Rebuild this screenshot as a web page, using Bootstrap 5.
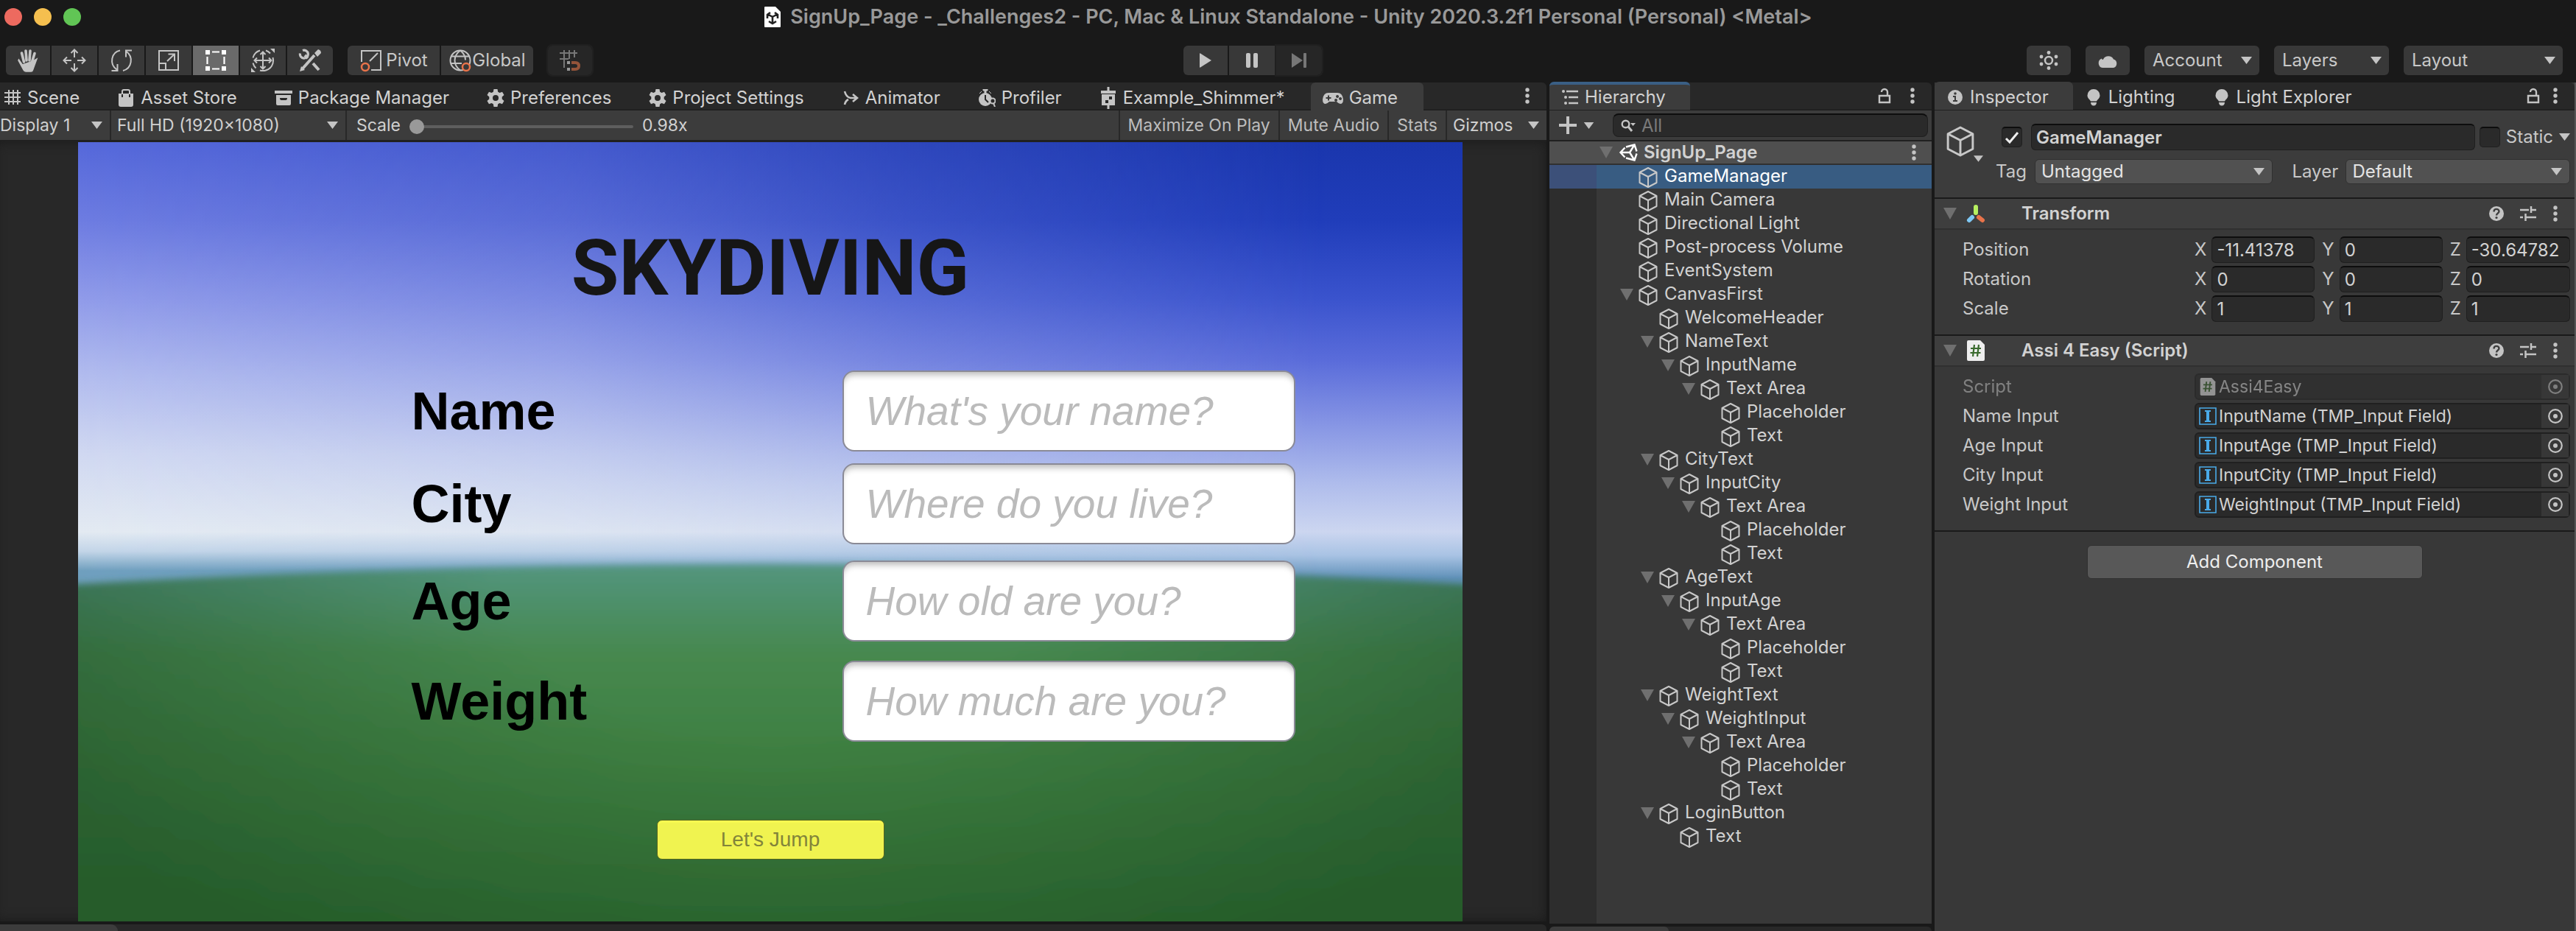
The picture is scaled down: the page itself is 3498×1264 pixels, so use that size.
<!DOCTYPE html>
<html lang="en">
<head>
<meta charset="utf-8">
<meta name="viewport" content="width=device-width, initial-scale=1">
<title>SignUp_Page - Unity Editor</title>
<link href="https://cdn.jsdelivr.net/npm/bootstrap@5.3.0/dist/css/bootstrap.min.css" rel="stylesheet">
<style>
:root{--edge:#191919;--strip:#282828;--bar:#3c3c3c;--panel:#383838;--txt:#c8c8c8;--well:#2a2a2a}
body{background:var(--edge);color:var(--txt);font-family:Inter,sans-serif;font-size:24px;line-height:32px}
svg{display:block;flex:none}
.ico{width:24px;height:24px;fill:#c4c4c4;stroke:none}
.ln{fill:none;stroke:#c4c4c4;stroke-width:2}
button,select,input{font:inherit;color:inherit}
button{background:none;border:0;padding:0}
.editor{height:100vh;overflow:hidden}
.titlebar{height:46px;color:#999;font-size:27px;font-weight:600}
.lights{width:220px;padding-left:6px;gap:16px}
.light{width:24px;height:24px;border-radius:50%}
.tools{height:66px;padding:0 18px 0 8px}
.tgroup{gap:2px}
.tbtn{height:40px;min-width:62px;background:var(--panel);display:flex;align-items:center;justify-content:center}
.tbtn.on{background:#6a6a6a}
.tbtn.rounded,.tgroup>.tbtn:first-child{min-width:60px}
.tgroup>.tbtn.named{min-width:125px}
.tbtn:disabled{background:#262626;outline:2px solid #202020}
.tgroup>:first-child{border-radius:6px 0 0 6px}
.tgroup>:last-child{border-radius:0 6px 6px 0}
.tgroup>:only-child{border-radius:6px}
.tbtn svg{width:32px;height:32px}
.lside{flex:1598 1 0}
.rside{flex:1684 1 0;gap:20px}
.tsel{height:40px;width:156px;background-color:var(--panel);border-radius:6px;padding:0 40px 0 11px}
.tsel.wide{width:216px}
.dd{border:0;appearance:none;background-repeat:no-repeat;background-position:right 10px center;background-size:15px 10px;
background-image:url("data:image/svg+xml,%3Csvg xmlns='http://www.w3.org/2000/svg' viewBox='0 0 15 10'%3E%3Cpath fill='%23c4c4c4' d='M0 0h15L7.5 10z'/%3E%3C/svg%3E")}
.gamecol{flex:1 1 0;min-width:0;margin-left:-8px}
.hiercol{flex:0 0 519px;min-width:0}
.inspcol{flex:0 0 871px;min-width:0;border-right:2px solid #555;background:var(--panel)}
.strip{height:38px;background:var(--strip);border-radius:6px 6px 0 0;border-bottom:2px solid #202020;flex:none}
.etab{display:flex;align-items:center;gap:8px;height:38px;padding:4px 35px 0 16px;color:#d2d2d2;text-decoration:none;white-space:nowrap}
.etab.on{background:var(--bar);border-radius:6px 6px 0 0}
.etab.focus{border-top:4px solid #3a5f85;padding-top:0}
.etab:first-child{padding-right:33px}
.gamecol .etab:first-child{padding-left:13px;padding-right:35px}
.gbar{height:42px;background:var(--bar);border-bottom:2px solid #202020;flex:none;font-size:23px;color:#d0d0d0}
.gbar>*{border-right:2px solid #282828;height:40px;display:flex;align-items:center;white-space:nowrap}
.gbar>:last-child{border:0}
.gbar>button{padding:0 11px;color:#bdbdbd}
.gsel{background-color:transparent;border-radius:0;flex:none}
.rng{appearance:none;background:none;width:304px;height:20px;margin:4px 12px 0 12px}
.rng::-webkit-slider-runnable-track{height:4px;background:#5e5e5e;border-radius:2px}
.rng::-webkit-slider-thumb{appearance:none;width:20px;height:20px;margin-top:-8px;border-radius:50%;background:#999}
.stage{flex:1 1 0;min-height:0;background:#282828;box-shadow:inset 0 0 16px #1a1a1a;padding-top:1px}
.screen{height:100%;min-width:0;aspect-ratio:16/9;font-family:"Liberation Sans",sans-serif}
.sky{position:absolute;inset:0;width:100%;height:100%;z-index:0}
.form-layer{position:relative;padding-top:119px}
.hero{font:700 105px/105px Roboto,sans-serif;color:#161616;margin:0 0 86px;text-align:center}
.frow{padding:0 227px 0 453px;height:110px}
.frow.g1{margin-top:16px}.frow.g2{margin-top:22px}.frow.g3{margin-top:26px}
.frow label{width:585px;flex:none;font-size:72px;line-height:80px;color:#000;font-weight:700}
.frow input{flex:1 1 0;width:0;min-width:0;height:110px;border:2px solid rgba(60,60,80,.6);border-radius:16px;background:#fff;padding:0 30px;font-size:55px;color:#323232;box-shadow:inset 0 8px 8px -4px #bbb}
.frow input::placeholder{color:#bbb;font-style:italic;opacity:1}
.jump{width:309px;height:54px;margin-top:106px;background:#f0f350;border:1px solid #56641f;border-radius:7px;font-size:28px;color:#82843a;box-shadow:inset 0 3px 1px #f8fb50}
.lower{background:var(--strip);border-radius:6px 6px 0 0;overflow:hidden;flex:none}
.lower div{background:var(--bar);height:100%;border-radius:6px 12px 0 0}
.hbar{height:42px;background:var(--bar);border-bottom:2px solid #202020;padding:4px 5px 4px 13px;flex:none}
.search{flex:1 1 0;height:32px;background:var(--well);border:1px solid #1f1f1f;border-top:2px solid #0d0d0d;border-radius:8px;padding-left:10px;gap:8px}
.search input{background:none;border:0;outline:0;flex:1 1 0;min-width:0;height:28px;padding:0}
.search input::placeholder{color:#7a7a7a;opacity:1}
.tree{flex:1 1 0;min-height:0;background:linear-gradient(90deg,#2d2d2d 64px,var(--panel) 64px);margin:0}
.tree li{display:flex;align-items:center;height:32px;white-space:nowrap;color:#d2d2d2}
.tree li span{padding-bottom:3px}
.tree svg.cube{width:28px;height:30px;margin:2px 8px 0 6px}
.tree .arr,.tri{width:18px;height:16px;fill:#6f6f6f;flex:none}
.tree .scene{background:#4f4f4f;border-bottom:2px solid #303030;font-weight:600;padding-left:68px;padding-right:20px}
.tree .scene span{padding-bottom:0}
.tree .pick{background:linear-gradient(90deg,#3c5079 64px,#385c82 64px);color:#fff}
.lv1{padding-left:96px}.lv2{padding-left:124px}.lv3{padding-left:152px}.lv4{padding-left:180px}.lv5{padding-left:208px}
.well{background:var(--well);border:1px solid #1f1f1f;border-top:2px solid #0d0d0d;border-radius:6px;height:36px;padding:0 6px;color:#d2d2d2;width:0;min-width:0}
.ihead{background:var(--bar);padding:16px 6px 18px 14px;border-bottom:2px solid #1a1a1a}
.cb{appearance:none;width:28px;height:28px;margin:0;flex:none;background:var(--well) center/20px no-repeat;border:1px solid #1f1f1f;border-top:2px solid #0d0d0d;border-radius:5px}
.cb:checked{background-image:url("data:image/svg+xml,%3Csvg xmlns='http://www.w3.org/2000/svg' viewBox='0 0 20 20'%3E%3Cpath fill='none' stroke='%23eee' stroke-width='3' d='M2 11l5 5L18 3'/%3E%3C/svg%3E")}
.pop{height:34px;background-color:#515151;border:1px solid #303030;border-radius:6px;padding:0 8px;color:#e4e4e4;min-width:0}
.comp{height:42px;background:#3e3e3e;border-bottom:2px solid #303030;padding:0 22px 0 12px}
.comp h2{font-size:24px;line-height:32px;font-weight:600;margin:0;color:#d2d2d2}
.props{padding:7px 6px 15px 38px;border-bottom:2px solid #1a1a1a}
.prow{display:flex;align-items:center;height:40px}
.prow>.nm{width:315px;flex:none}
.axes{gap:10px}
.axes label{display:flex;align-items:center;flex:1 1 0;min-width:0;gap:7px}
.axes input{flex:1 1 0}
.obj{flex:1 1 0;display:flex;align-items:center;height:36px;background:var(--well);border:2px solid #202020;border-radius:6px;font-size:23px;color:#d2d2d2;padding-left:4px;gap:3px}
.obj .pickr{margin-left:auto;width:37px;height:32px;background:#373737;display:flex;align-items:center;justify-content:center}
.dim{opacity:.5}
.addc{width:456px;height:46px;background:#585858;border:1px solid #303030;border-radius:6px;color:#eee;margin-top:18px}
</style>
</head>
<body>
<svg width="0" height="0" class="position-absolute" aria-hidden="true">
<symbol id="cube" viewBox="0 0 28 30"><path d="M14 2l11.500 6v14L14 28 2.500 22V8zM2.500 8L14 14l11.500-6M14 14v14" fill="none" stroke="#c8c8c8" stroke-width="2" stroke-linejoin="round"/></symbol>
<symbol id="tri" viewBox="0 0 18 16"><path d="M0 0h18L9 16z"/></symbol>
<symbol id="dots" viewBox="0 0 6 24"><circle cx="3" cy="4" r="2.700"/><circle cx="3" cy="12" r="2.700"/><circle cx="3" cy="20" r="2.700"/></symbol>
<symbol id="lock" viewBox="0 0 18 24"><path d="M2 12h14v9H2zM13 12V7a4 4 0 0 0-8 0" fill="none" stroke="#c4c4c4" stroke-width="2.400"/></symbol>
<symbol id="gear" viewBox="0 0 24 24"><path fill-rule="evenodd" d="M9.500 0h5l.7 3.700 2.300 1.300 3.500-1.300 2.500 4.300-2.800 2.500v3l2.800 2.500-2.500 4.300-3.500-1.300-2.300 1.300-.7 3.700h-5l-.7-3.700-2.300-1.300L3 20.300.5 16l2.800-2.500v-3L.5 8 3 3.700 6.500 5l2.300-1.300zM12 8a4 4 0 1 0 0 8 4 4 0 0 0 0-8z"/></symbol>
<symbol id="bulb" viewBox="0 0 24 24"><path d="M12 1a8.500 8.500 0 0 1 8.500 8.500c0 4-3 5-4.500 8H8c-1.500-3-4.500-4-4.500-8A8.500 8.500 0 0 1 12 1zM8 19h8c0 3-2 4.500-4 4.500S8 22 8 19z"/></symbol>
<symbol id="help" viewBox="0 0 20 20"><circle cx="10" cy="10" r="10"/><path d="M6.500 7.500c0-5 7-4.500 7-.5 0 2.500-3.500 2.500-3.500 5.500" fill="none" stroke="#3e3e3e" stroke-width="2.400"/><circle cx="10" cy="15.500" r="1.600" fill="#3e3e3e"/></symbol>
<symbol id="preset" viewBox="0 0 22 22"><path d="M0 6h12M16 6h6M15 1v9M0 16h4M8 16h14M7.500 11v10" fill="none" stroke="#c4c4c4" stroke-width="2.500"/></symbol>
<symbol id="script" viewBox="0 0 24 28"><path d="M0 2q0-2 2-2h16l6 6v20q0 2-2 2H2q-2 0-2-2z" fill="#eee"/><path d="M10 6L8 22M16 6l-2 16M5 11h14M4.500 17h14" stroke="#3a6b2e" stroke-width="2.200"/></symbol>
<symbol id="tmp" viewBox="0 0 24 24"><path d="M1 1h22v22H1z" fill="none" stroke="#4aaae8" stroke-width="1.600"/><path d="M8 4h8v2h-2v12h2v2H8v-2h2V6H8z" fill="#4aaae8"/></symbol>
<symbol id="target" viewBox="0 0 20 20"><circle cx="10" cy="10" r="8.800" fill="none" stroke="#c4c4c4" stroke-width="2.200"/><circle cx="10" cy="10" r="3"/></symbol>
</svg>

<div class="editor d-flex flex-column">
<header class="titlebar d-flex align-items-center">
  <div class="lights d-flex"><span class="light" style="background:#ed6a5f"></span><span class="light" style="background:#f5bf4f"></span><span class="light" style="background:#61c555"></span></div>
  <div class="flex-fill d-flex align-items-center justify-content-center gap-2">
    <svg width="24" height="30" viewBox="0 0 24 30" class="me-1"><path d="M1 2q0-1 1-1h14l7 7v20q0 1-1 1H2q-1 0-1-1z" fill="#fff"/><path d="M12 15v8M12 15L6 11.500M12 15l6-3.500M5 17v-5l4-3M19 17v-5l-4-3M7 21l5 3 5-3" fill="none" stroke="#222" stroke-width="2.600"/></svg>
    <span>SignUp_Page - _Challenges2 - PC, Mac &amp; Linux Standalone - Unity 2020.3.2f1 Personal (Personal) &lt;Metal&gt;</span>
  </div>
  <div class="lights"></div>
</header>

<nav class="tools d-flex align-items-start pt-3" aria-label="Toolbar">
  <div class="lside d-flex">
    <div class="tgroup d-flex">
      <button class="tbtn" aria-label="Hand"><svg viewBox="0 0 32 32" fill="none" stroke="#c4c4c4" stroke-linecap="round"><path d="M10.500 18L7.500 6M14 16L13 3M18 16l1-13M21.500 18L25 6.500" stroke-width="3.600"/><path d="M3.500 15l5 7L23 17l5-3-5.500 15q-.5 2-2.500 2h-7q-2 0-3-2L3 16z" fill="#c4c4c4" stroke-width="1.500"/></svg></button>
      <button class="tbtn" aria-label="Move"><svg class="ln" viewBox="0 0 32 32"><path d="M16 1v11M16 20v11M1 16h11M20 16h11M11.500 6L16 1.500 20.500 6M11.500 26l4.500 4.500 4.500-4.500M6 11.500L1.500 16 6 20.500M26 11.500l4.500 4.500-4.500 4.500"/></svg></button>
      <button class="tbtn" aria-label="Rotate"><svg class="ln" viewBox="0 0 32 32"><path d="M14 2.500C2 5 -1 21 9.500 28.500M2.500 30h8v-9M18 30C30 27 33 11 22 3.500M30 2.500h-8v9"/></svg></button>
      <button class="tbtn" aria-label="Scale"><svg class="ln" viewBox="0 0 32 32"><path d="M3 3h26v26H3zM3 20h9v9M14 17L24 7.500M15.500 7.500H24V17"/></svg></button>
      <button class="tbtn on" aria-label="Rect"><svg viewBox="0 0 32 32"><path d="M2 2h6v6H2zM24 2h6v6h-6zM2 24h6v6H2zM24 24h6v6h-6z" fill="#fff"/><path d="M11 4.500h10M11 27.500h10M4.500 11v10M27.500 11v10" stroke="#fff" stroke-width="2.200"/></svg></button>
      <button class="tbtn" aria-label="Transform"><svg class="ln" viewBox="0 0 32 32"><path d="M16 4v24M4 16h24M12.500 8L16 4.500 19.500 8M12.500 24l3.500 3.500 3.500-3.500M8 12.500L4.500 16 8 19.500M24 12.500l3.500 3.500-3.500 3.500M12 2.500a14 14 0 0 0-9.500 10M20 2.500a14 14 0 0 1 6 4M29.500 12a14 14 0 0 1 0 8M2.500 19.500a14 14 0 0 0 4 7M12 29.500a14 14 0 0 0 8 0M29.500 20a14 14 0 0 1-9.500 9.500"/><path d="M26 0h6v6zM0 26v6h6z" fill="#c4c4c4" stroke="none"/></svg></button>
      <button class="tbtn" aria-label="Custom tools"><svg viewBox="0 0 32 32"><path d="M6 27L22 9" stroke="#c4c4c4" stroke-width="4"/><path d="M2 31l2-7 5 5zM22 6l5-5q4 1 4 5l-5 5z" fill="#c4c4c4"/><path d="M9 9l4 4M20 20l8 9" stroke="#c4c4c4" stroke-width="4"/><path d="M6 2.500a5.500 5.500 0 1 1-3.500 4" fill="none" stroke="#c4c4c4" stroke-width="3.200"/></svg></button>
    </div>
    <div class="tgroup d-flex" style="margin-left:20px">
      <button class="tbtn named gap-1"><svg viewBox="0 0 32 32" class="ln"><path d="M3 18V3h26v26H16M14 17L25 6"/><circle cx="8" cy="25" r="5" stroke="#e8734a" stroke-width="2.500"/></svg>Pivot</button>
      <button class="tbtn named"><svg viewBox="0 0 32 32" class="ln"><circle cx="16" cy="16" r="13.500"/><path d="M16 2.500C6 10 6 22 16 29.500M16 2.500c5 4 7 9 7 13M4 10.500h24M3 20h15"/><circle cx="24" cy="25" r="5" stroke="#e8734a" stroke-width="2.500" fill="#383838"/></svg>Global</button>
    </div>
    <div class="tgroup d-flex" style="margin-left:20px"><button class="tbtn" disabled aria-label="Grid snapping"><svg viewBox="0 0 32 32" fill="none"><path d="M8 2v24M15 2v12M22 2v10M2 6h24M2 14h12" stroke="#777" stroke-width="2"/><path d="M18 19h5q5 0 5 4.500T23 28h-5" stroke="#94543a" stroke-width="4"/><path d="M14 17v4M14 26v4" stroke="#999" stroke-width="4"/></svg></button></div>
  </div>
  <div class="tgroup d-flex">
    <button class="tbtn" aria-label="Play"><svg viewBox="0 0 32 32" fill="#c4c4c4"><path d="M8 7q0-1 1-.5L24 16 9 25.500q-1 .5-1-.5z"/></svg></button>
    <button class="tbtn" aria-label="Pause"><svg viewBox="0 0 32 32" fill="#c4c4c4"><rect x="8" y="6" width="6" height="20" rx="2"/><rect x="18" y="6" width="6" height="20" rx="2"/></svg></button>
    <button class="tbtn" disabled aria-label="Step"><svg viewBox="0 0 32 32" fill="#777"><path d="M6 6l15 10L6 26z"/><rect x="22" y="6" width="4" height="20" rx="1"/></svg></button>
  </div>
  <div class="rside d-flex justify-content-end">
    <button class="tbtn rounded" aria-label="Collaborate"><svg viewBox="0 0 32 32" fill="#c4c4c4"><circle cx="16" cy="16" r="5" fill="none" stroke="#c4c4c4" stroke-width="2.500"/><circle cx="16" cy="5.500" r="2.400"/><circle cx="16" cy="26.500" r="2.400"/><circle cx="6" cy="11" r="2.400"/><circle cx="26" cy="11" r="2.400"/><circle cx="6" cy="21" r="2.400"/><circle cx="26" cy="21" r="2.400"/></svg></button>
    <button class="tbtn rounded" aria-label="Cloud"><svg viewBox="0 0 32 32" fill="#c4c4c4"><path d="M9 26a6.500 6.500 0 0 1-1-12.500q1 2.500 2 1A8 8 0 0 1 24 14.500 6 6 0 0 1 24 26z"/></svg></button>
    <select class="dd tsel" aria-label="Account"><option>Account</option></select>
    <select class="dd tsel" aria-label="Layers"><option>Layers</option></select>
    <select class="dd tsel wide" aria-label="Layout"><option>Layout</option></select>
  </div>
</nav>

<main class="d-flex flex-fill gap-1" style="min-height:0">
<section class="gamecol d-flex flex-column">
  <div class="strip d-flex">
    <a class="etab" href="#"><svg class="ico ln" viewBox="0 0 24 24" style="fill:none;stroke:#c4c4c4"><path d="M7 1v20M13 1v20M19 1v20M1 5h22M1 11h22M1 17h22"/></svg>Scene</a>
    <a class="etab" href="#"><svg class="ico" viewBox="0 0 24 24"><path d="M2 6h20v15q0 3-3 3H5q-3 0-3-3z"/><path d="M7 12V3q0-2 2-2h6q2 0 2 2v9" fill="none" stroke="#c4c4c4" stroke-width="2"/><path d="M7 7v4M17 7v4" stroke="#282828" stroke-width="2"/></svg>Asset Store</a>
    <a class="etab" href="#"><svg class="ico" viewBox="0 0 24 24"><path d="M0 2h24v4H0z"/><path fill-rule="evenodd" d="M2 8h20v12q0 2-2 2H4q-2 0-2-2zM7 12q0 3 2 3h6q2 0 2-3z"/></svg>Package Manager</a>
    <a class="etab" href="#"><svg class="ico"><use href="#gear"/></svg>Preferences</a>
    <a class="etab" href="#"><svg class="ico"><use href="#gear"/></svg>Project Settings</a>
    <a class="etab" href="#"><svg class="ico" viewBox="0 0 24 24"><path d="M4 3q2 8 8 9h8M4 21q1-5 5-7M15 7l6 5-6 5" fill="none" stroke="#c4c4c4" stroke-width="2.600"/></svg>Animator</a>
    <a class="etab" href="#"><svg class="ico" viewBox="0 0 24 24"><circle cx="10" cy="14" r="9"/><path d="M7 0h6v2H7zM9 2h2v4H9zM2 6l3-3M15 3l3 3" stroke="#c4c4c4"/><path d="M10 8v6l4 4" fill="none" stroke="#282828" stroke-width="2"/><circle cx="20" cy="16" r="3.500" fill="#282828" stroke="#c4c4c4" stroke-width="2"/><path d="M21 19l2 5" stroke="#c4c4c4" stroke-width="2"/></svg>Profiler</a>
    <a class="etab" href="#"><svg class="ico" style="overflow:visible" viewBox="0 0 24 24"><path d="M2 2h20v4H2zM3 7h18v15H3z"/><path d="M12-3v5M12 22v5" stroke="#c4c4c4" stroke-width="3"/><path d="M13 10h4v4h-4zM8 15h4v4H8z" fill="#282828"/></svg>Example_Shimmer*</a>
    <a class="etab on" href="#" aria-current="page"><svg class="ico" style="width:28px" viewBox="0 0 28 24"><path fill-rule="evenodd" d="M8 5h12q7 0 8 9 0 6-4 6-2 0-5-3H9q-3 3-5 3-4 0-4-6 1-9 8-9zM7 8.500v2.500H4.500v2H7v2.500h2V13h2.500v-2H9V8.500zM20 8a2 2 0 1 0 .1 0zM18 13a2 2 0 1 0 .1 0zM24 11a2 2 0 1 0 .1 0z"/></svg>Game</a>
    <svg class="ico ms-auto my-auto me-3" style="width:20px"><use href="#dots"/></svg>
  </div>
  <div class="gbar d-flex">
    <select class="dd gsel" style="width:159px;padding-left:8px" aria-label="Display"><option>Display 1</option></select>
    <select class="dd gsel" style="width:320px;padding-left:8px" aria-label="Resolution"><option>Full HD (1920x1080)</option></select>
    <div class="flex-fill" style="padding-left:13px"><label for="scl">Scale</label><input id="scl" class="rng" type="range" min="0" max="100" value="0">0.98x</div>
    <button>Maximize On Play</button>
    <button>Mute Audio</button>
    <button>Stats</button>
    <select class="dd gsel" style="width:135px;padding-left:8px" aria-label="Gizmos"><option>Gizmos</option></select>
  </div>
  <div class="stage d-flex justify-content-center">
    <div class="screen position-relative">
      <svg class="sky" viewBox="0 0 1883 1059" preserveAspectRatio="none" aria-hidden="true">
        <defs>
          <linearGradient id="gr" x2="0" y2="1"><stop offset="0" stop-color="#1a36ad"/><stop offset=".1" stop-color="#203dba"/><stop offset=".2" stop-color="#3a53cd"/><stop offset=".28" stop-color="#5a6cda"/><stop offset=".36" stop-color="#8594e4"/><stop offset=".44" stop-color="#b0bdec"/><stop offset=".5" stop-color="#ccd6f0"/><stop offset=".53" stop-color="#a9c3e4"/><stop offset=".56" stop-color="#5f90b8"/></linearGradient>
          <linearGradient id="gl" x2="0" y2="1"><stop offset="0" stop-color="#5568da"/><stop offset=".1" stop-color="#6d7ce1"/><stop offset=".2" stop-color="#909be9"/><stop offset=".3" stop-color="#b2bcee"/><stop offset=".4" stop-color="#d0d8f1"/><stop offset=".5" stop-color="#e3eaf2"/><stop offset=".525" stop-color="#c3d5e8"/><stop offset=".55" stop-color="#6f9fbe"/></linearGradient>
          <linearGradient id="mk"><stop offset="0" stop-color="#fff"/><stop offset=".35" stop-color="#bbb"/><stop offset=".6" stop-color="#555"/><stop offset=".9" stop-color="#000"/></linearGradient>
          <mask id="mm"><rect width="1883" height="1059" fill="url(#mk)"/></mask>
          <linearGradient id="gg" x2="0" y2="1"><stop offset="0" stop-color="#53957e"/><stop offset=".22" stop-color="#46884f"/><stop offset=".45" stop-color="#3f8042"/><stop offset="1" stop-color="#2f6e30"/></linearGradient>
          <radialGradient id="vg" gradientUnits="userSpaceOnUse" cx="0" cy="0" r="1" gradientTransform="translate(941 560) scale(1080 700)"><stop offset=".35" stop-color="#123a1c" stop-opacity="0"/><stop offset="1" stop-color="#123a1c" stop-opacity=".42"/></radialGradient>
          <filter id="bl" x="-5%" y="-5%" width="110%" height="110%"><feGaussianBlur stdDeviation="5"/></filter>
        </defs>
        <rect width="1883" height="1059" fill="url(#gr)"/>
        <rect width="1883" height="1059" fill="url(#gl)" mask="url(#mm)"/>
        <g filter="url(#bl)"><path d="M-60 604Q941 544 1943 604V1120H-60z" fill="url(#gg)"/><path d="M-60 604Q941 544 1943 604V1120H-60z" fill="url(#vg)"/></g>
      </svg>
      <form class="form-layer">
        <h1 class="hero">SKYDIVING</h1>
        <div class="frow d-flex align-items-center"><label for="fn">Name</label><input id="fn" type="text" placeholder="What's your name?"></div>
        <div class="frow g1 d-flex align-items-center"><label for="fc">City</label><input id="fc" type="text" placeholder="Where do you live?"></div>
        <div class="frow g2 d-flex align-items-center"><label for="fa">Age</label><input id="fa" type="text" placeholder="How old are you?"></div>
        <div class="frow g3 d-flex align-items-center"><label for="fw">Weight</label><input id="fw" type="text" placeholder="How much are you?"></div>
        <button type="button" class="jump d-block mx-auto">Let's Jump</button>
      </form>
    </div>
  </div>
  <div class="lower mt-1" style="height:9px"><div style="width:168px"></div></div>
</section>

<section class="hiercol d-flex flex-column">
  <div class="strip d-flex align-items-center">
    <a class="etab on focus" href="#" aria-current="page"><svg class="ico" viewBox="0 0 24 24"><path d="M7 4h16M10 12h13M10 20h13" stroke="#c4c4c4" stroke-width="2.400"/><circle cx="3" cy="4" r="2"/><circle cx="6" cy="12" r="2"/><circle cx="6" cy="20" r="2"/></svg>Hierarchy</a>
    <svg class="ico ms-auto"><use href="#lock"/></svg><svg class="ico mx-3" style="width:20px"><use href="#dots"/></svg>
  </div>
  <div class="hbar d-flex align-items-center">
    <button class="d-flex align-items-center" style="width:73px;gap:9px" aria-label="Create"><svg width="24" height="24" viewBox="0 0 24 24"><path d="M12 0v24M0 12h24" stroke="#c4c4c4" stroke-width="4"/></svg><svg width="15" height="9" viewBox="0 0 15 10" fill="#c4c4c4"><path d="M0 0h15L7.500 10z"/></svg></button>
    <div class="search d-flex align-items-center"><svg width="20" height="18" viewBox="0 0 20 18"><circle cx="6.500" cy="6.500" r="4.800" fill="none" stroke="#c4c4c4" stroke-width="2.400"/><path d="M10 10l5 6" stroke="#c4c4c4" stroke-width="3"/><path d="M13 5h7l-3.500 4z" fill="#c4c4c4"/></svg><input type="search" placeholder="All" aria-label="Search hierarchy"></div>
  </div>
  <ul class="tree list-unstyled" id="tree">
    <li class="scene"><svg class="arr"><use href="#tri"/></svg><svg class="mx-2" width="26" height="26" viewBox="0 0 26 26" fill="none" stroke="#fff" stroke-width="2.400"><path d="M10 5.500L21.500 2.500l3 9M10 20.500l11.500 3 3-9M8.500 6.500L2.500 13l6 6.500M3 13h12M15 13l6.500-10.500M15 13l6.500 10.500"/></svg><span>SignUp_Page</span><svg class="ico ms-auto" style="width:8px"><use href="#dots"/></svg></li>
  </ul>
  <div class="lower mt-1" style="height:6px"><div style="width:162px"></div></div>
</section>

<aside class="inspcol">
  <div class="strip d-flex align-items-center">
    <a class="etab on" href="#" aria-current="page"><svg class="ico" viewBox="0 0 24 24"><circle cx="12" cy="12" r="10"/><path d="M9 10h4v6h2v2H9v-2h2v-4H9z" fill="#3c3c3c"/><circle cx="12" cy="7" r="1.800" fill="#3c3c3c"/></svg>Inspector</a>
    <a class="etab" href="#"><svg class="ico"><use href="#bulb"/></svg>Lighting</a>
    <a class="etab" href="#"><svg class="ico"><use href="#bulb"/></svg>Light Explorer</a>
    <svg class="ico ms-auto"><use href="#lock"/></svg><svg class="ico ms-2 me-3" style="width:20px"><use href="#dots"/></svg>
  </div>
  <div class="ihead d-flex">
    <div class="d-flex" style="width:77px;padding-top:4px"><svg width="42" height="44" viewBox="0 0 28 30"><use href="#cube"/></svg><svg width="13" height="9" viewBox="0 0 15 10" fill="#c4c4c4" style="margin:41px 0 0 -3px"><path d="M0 0h15L7.500 10z"/></svg></div>
    <div class="flex-fill">
      <div class="d-flex align-items-center" style="gap:12px;height:40px">
        <input type="checkbox" class="cb" checked aria-label="Active"><input class="well flex-fill fw-semibold" value="GameManager" aria-label="Name">
        <label class="d-flex align-items-center gap-2" style="margin-left:-6px"><input type="checkbox" class="cb">Static<svg width="15" height="10" viewBox="0 0 15 10" fill="#c4c4c4"><path d="M0 0h15L7.500 10z"/></svg></label>
      </div>
      <div class="d-flex align-items-center" style="padding-top:10px">
        <label for="tg" style="margin-left:-8px;width:53px">Tag</label><select id="tg" class="dd pop" style="flex:324 1 0"><option>Untagged</option></select>
        <label for="ly" style="margin-left:26px;width:73px">Layer</label><select id="ly" class="dd pop" style="flex:304 1 0"><option>Default</option></select>
      </div>
    </div>
  </div>
  <div class="comp d-flex align-items-center">
    <svg class="tri"><use href="#tri"/></svg>
    <svg width="28" height="28" viewBox="0 0 28 28" style="margin:0 48px 0 12px" stroke-linecap="round" stroke-width="6"><path d="M14 5v8" stroke="#b7ef60"/><path d="M9 19l-4 4" stroke="#7fc8f5"/><path d="M18 19l5 4" stroke="#e8734a"/></svg>
    <h2>Transform</h2>
    <svg class="ico ms-auto" style="width:20px"><use href="#help"/></svg><svg class="ico" style="margin:0 22px;width:22px"><use href="#preset"/></svg><svg class="ico" style="width:8px"><use href="#dots"/></svg>
  </div>
  <div class="props" id="xf"></div>
  <div class="comp d-flex align-items-center">
    <svg class="tri"><use href="#tri"/></svg>
    <svg width="28" height="28" style="margin:0 48px 0 12px"><use href="#script"/></svg>
    <h2>Assi 4 Easy (Script)</h2>
    <svg class="ico ms-auto" style="width:20px"><use href="#help"/></svg><svg class="ico" style="margin:0 22px;width:22px"><use href="#preset"/></svg><svg class="ico" style="width:8px"><use href="#dots"/></svg>
  </div>
  <div class="props" id="refs"></div>
  <button class="addc d-block mx-auto">Add Component</button>
</aside>
</main>
</div>

<script>
// [depth, name, has children]
const nodes=[[1,'GameManager'],[1,'Main Camera'],[1,'Directional Light'],[1,'Post-process Volume'],[1,'EventSystem'],[1,'CanvasFirst',1],[2,'WelcomeHeader']];
for(const [a,b] of [['NameText','InputName'],['CityText','InputCity'],['AgeText','InputAge'],['WeightText','WeightInput']])
  nodes.push([2,a,1],[3,b,1],[4,'Text Area',1],[5,'Placeholder'],[5,'Text']);
nodes.push([2,'LoginButton',1],[3,'Text']);
document.getElementById('tree').insertAdjacentHTML('beforeend',nodes.map(([d,n,k],i)=>
 `<li class="lv${d}${i?'':' pick'}"><svg class="arr">${k?'<use href="#tri"/>':''}</svg><svg class="cube"><use href="#cube"/></svg><span>${n}</span></li>`).join(''));
document.getElementById('xf').innerHTML=[['Position','-11.41378','0','-30.64782'],['Rotation','0','0','0'],['Scale','1','1','1']].map(([n,...v])=>
 `<div class="prow"><span class="nm">${n}</span><div class="axes d-flex flex-fill">${v.map((x,i)=>`<label>${'XYZ'[i]}<input class="well" value="${x}"></label>`).join('')}</div></div>`).join('');
document.getElementById('refs').innerHTML=[['Script','Assi4Easy','script'],['Name Input','InputName (TMP_Input Field)','tmp'],['Age Input','InputAge (TMP_Input Field)','tmp'],['City Input','InputCity (TMP_Input Field)','tmp'],['Weight Input','WeightInput (TMP_Input Field)','tmp']].map(([n,v,k])=>
 `<div class="prow${k=='script'?' dim':''}"><span class="nm">${n}</span><div class="obj"><svg class="ico"><use href="#${k}"/></svg>${v}<button class="pickr" aria-label="Select ${n}"><svg class="ico" style="width:20px"><use href="#target"/></svg></button></div></div>`).join('');
</script>
<script src="https://cdn.jsdelivr.net/npm/bootstrap@5.3.0/dist/js/bootstrap.bundle.min.js"></script>
</body>
</html>
